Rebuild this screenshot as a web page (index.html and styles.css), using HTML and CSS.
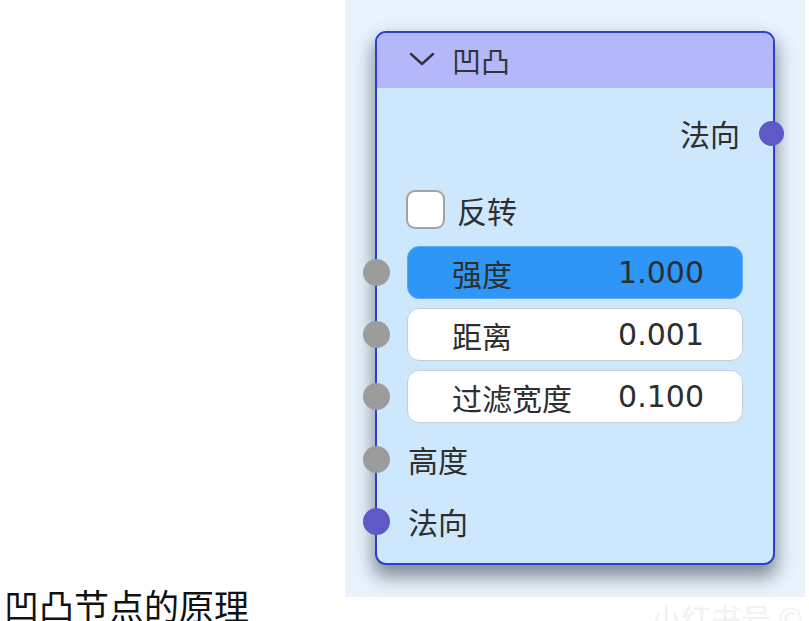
FILE: index.html
```html
<!doctype html>
<html lang="zh-CN">
  <head>
    <meta charset="utf-8">
    <title>凹凸节点的原理</title>
    <link rel="stylesheet" href="styles.css">
  </head>

  <body>
    <div id="page">
      <div id="canvas">
        <div class="node">
          <div class="node-header">
            <svg class="chevron" width="26" height="14" viewBox="0 0 26 14">
              <polyline points="2,2 13,12 24,2" fill="none" stroke="#333" stroke-width="2.4" stroke-linecap="round" stroke-linejoin="round" />
            </svg>
            <span class="node-title">凹凸</span>
          </div>

          <div class="node-body">
            <div class="row row-output">
              <span>法向</span>
              <span class="socket socket-out vector"></span>
            </div>

            <div class="row row-check">
              <span class="checkbox"></span>
              <span>反转</span>
            </div>

            <div class="row row-field">
              <span class="socket socket-in float"></span>
              <div class="field active">
                <span>强度</span>
                <span class="num">1.000</span>
              </div>
            </div>

            <div class="row row-field">
              <span class="socket socket-in float"></span>
              <div class="field">
                <span>距离</span>
                <span class="num">0.001</span>
              </div>
            </div>

            <div class="row row-field">
              <span class="socket socket-in float"></span>
              <div class="field">
                <span>过滤宽度</span>
                <span class="num">0.100</span>
              </div>
            </div>

            <div class="row row-input">
              <span class="socket socket-in float"></span>
              <span>高度</span>
            </div>

            <div class="row row-input">
              <span class="socket socket-in vector"></span>
              <span>法向</span>
            </div>
          </div>
        </div>
      </div>

      <div id="caption">凹凸节点的原理</div>
      <div id="watermark">小红书号 ©</div>
    </div>
  </body>
</html>
```

FILE: styles.css
```css
body {
  margin: 0;
  background: #fff;
  font-family: "Noto Sans CJK SC", "Noto Sans", sans-serif;
  color: #333;
  overflow: hidden;
}

#page {
  display: grid;
  grid-template-columns: 345px 460px 1fr;
  grid-template-rows: 584px 13px 24px;
  width: 809px;
  height: 621px;
}

#canvas {
  grid-column: 2;
  grid-row: 1 / 3;
  background: #e8f3fd;
  padding: 31px 0 0 30px;
  box-sizing: border-box;
}

#caption {
  grid-column: 1 / 3;
  grid-row: 2 / 4;
  padding-left: 4px;
  font-size: 35px;
  line-height: 41px;
  color: #111;
  white-space: nowrap;
}

#watermark {
  grid-column: 2 / 4;
  grid-row: 3;
  justify-self: end;
  padding-right: 6px;
  font-size: 30px;
  line-height: 40px;
  color: #f2f2f2;
  white-space: nowrap;
  overflow: hidden;
}

/* node */

.node {
  width: 400px;
  height: 534px;
  box-sizing: border-box;
  border: 2px solid #2a40d2;
  border-radius: 11px;
  background: #cde8fc;
  box-shadow: 0 10px 18px 2px rgba(30, 40, 50, 0.5);
  display: flex;
  flex-direction: column;
}

.node-header {
  height: 55px;
  background: #b4b8fa;
  border-radius: 9px 9px 0 0;
  display: flex;
  align-items: center;
  padding-left: 32px;
  gap: 17px;
}

.chevron {
  margin-top: -4px;
}

.node-title {
  font-size: 29px;
  line-height: 1;
}

.node-body {
  flex: 1;
  display: flex;
  flex-direction: column;
  padding-top: 22px;
  font-size: 30px;
  color: #2e2e2e;
}

.row {
  position: relative;
  display: flex;
  align-items: center;
  line-height: 1;
}

.row-output {
  height: 46px;
  justify-content: flex-end;
  padding-right: 33px;
  margin-bottom: 34px;
}

.row-check {
  height: 39px;
  padding-left: 29px;
  gap: 12px;
  margin-bottom: 17px;
}

.checkbox {
  width: 39px;
  height: 39px;
  box-sizing: border-box;
  border: 2px solid #a3a3a3;
  border-radius: 9px;
  background: #fff;
}

.row-field {
  height: 53px;
  padding: 0 30px;
  margin-bottom: 9px;
}

.row-field:nth-child(5) {
  margin-bottom: 16px;
}

.field {
  flex: 1;
  height: 100%;
  box-sizing: border-box;
  border: 1.5px solid #c9cdd2;
  border-radius: 12px;
  background: #fff;
  display: flex;
  align-items: center;
  justify-content: space-between;
  padding: 0 38px 0 44px;
}

.field.active {
  background: #2d96f6;
  border-color: #5aa9ee;
}

.num {
  font-family: "DejaVu Sans", sans-serif;
  font-size: 30px;
}

.row-input {
  height: 40px;
  padding-left: 31px;
  margin-bottom: 22px;
}

/* sockets */

.socket {
  position: absolute;
  top: 50%;
  border-radius: 50%;
}

.socket-in {
  left: -14px;
  width: 27px;
  height: 27px;
  margin-top: -13.5px;
}

.socket-out {
  right: -11px;
  width: 25px;
  height: 25px;
  margin-top: -12.5px;
}

.float {
  background: #9c9c9c;
}

.vector {
  background: #5f59c8;
}
```
